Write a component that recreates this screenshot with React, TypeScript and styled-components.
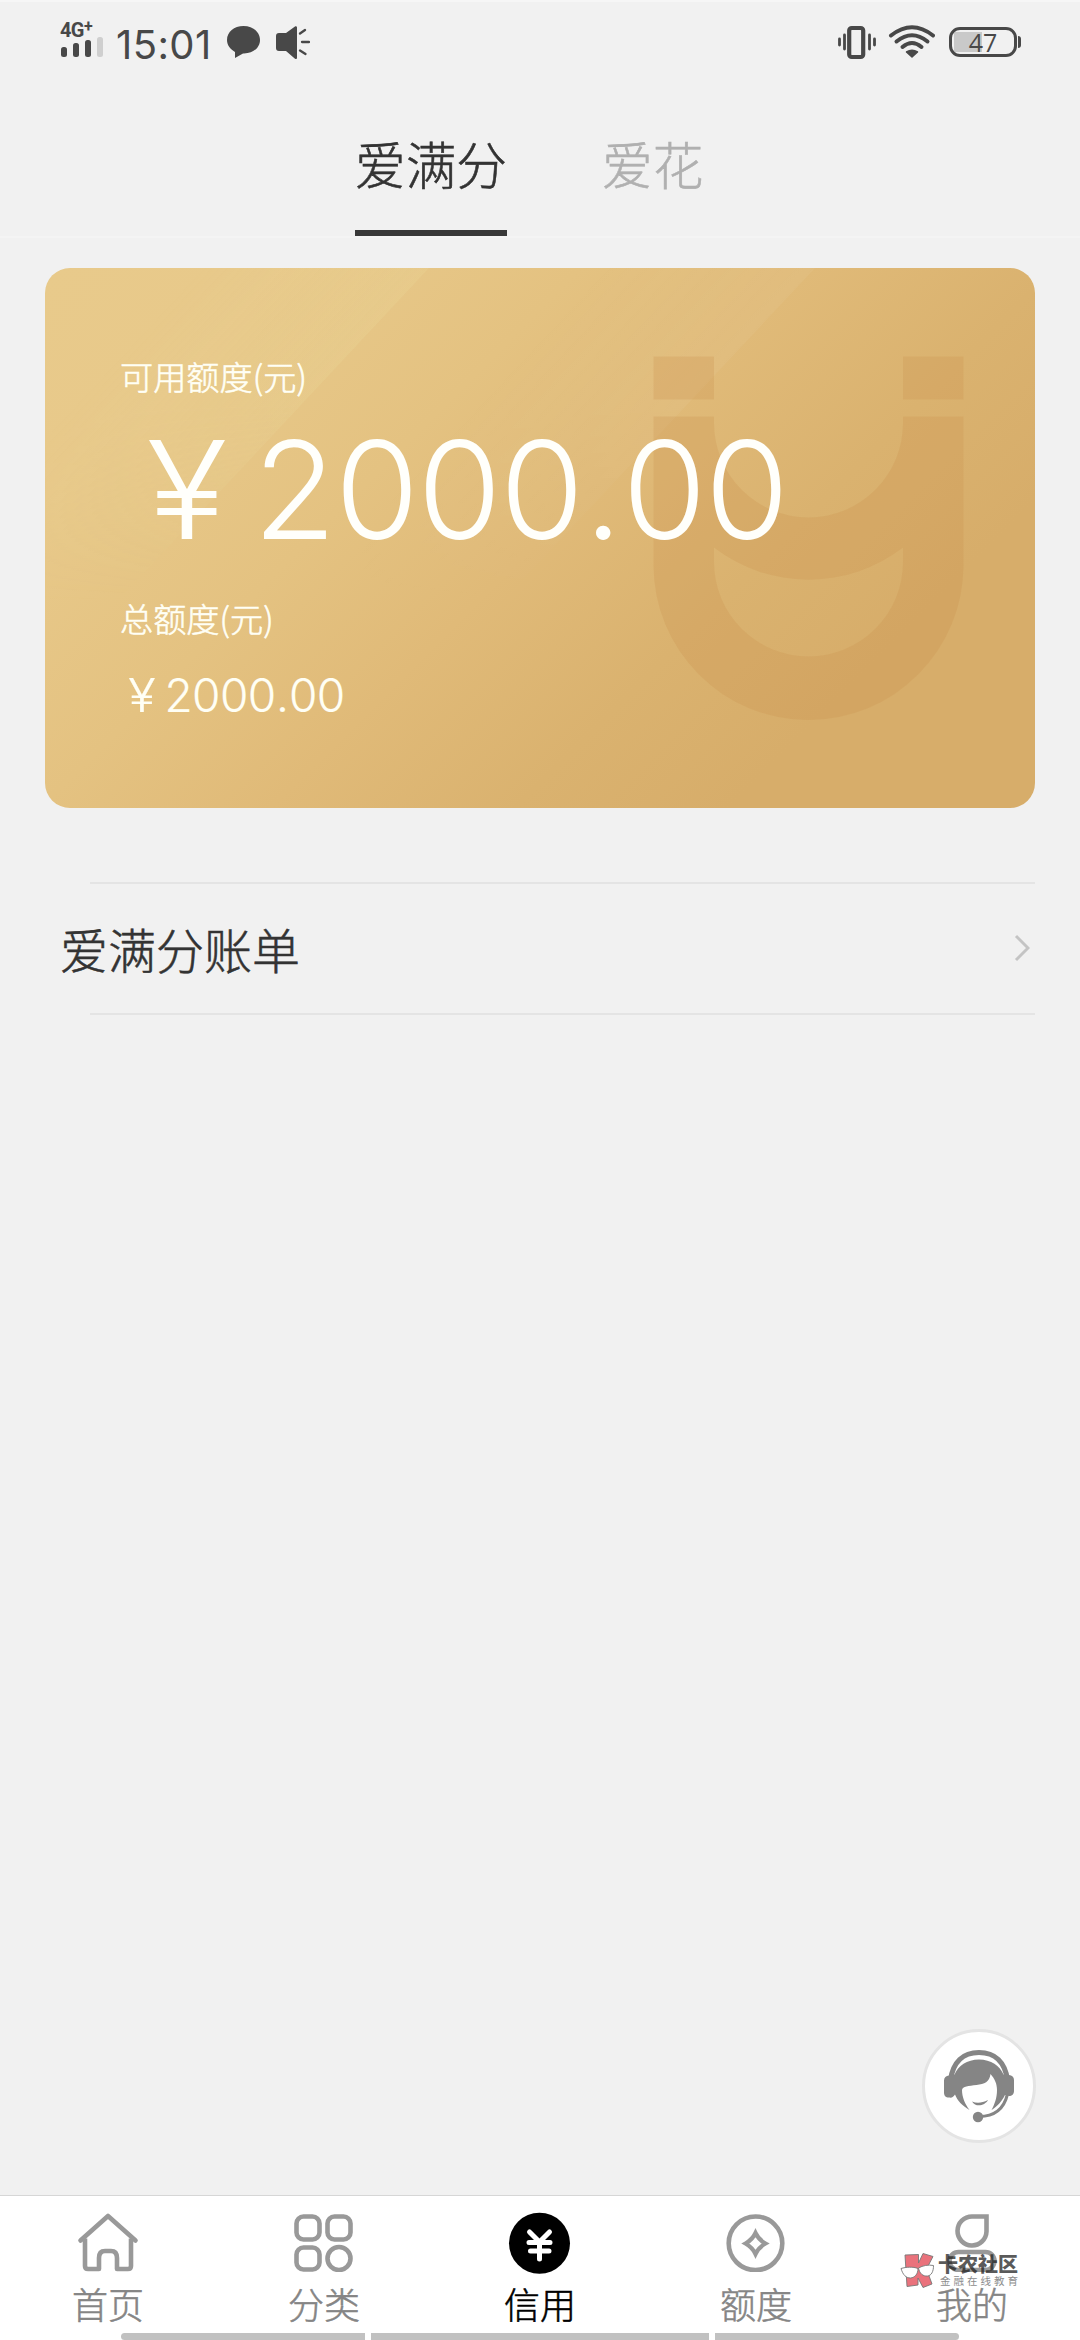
import React from "react";
import styled, { createGlobalStyle } from "styled-components";

const CJK = `"Noto Sans CJK SC", sans-serif`;
const LATIN = `Inter, "Noto Sans CJK SC", sans-serif`;

const GlobalStyle = createGlobalStyle`
  * { box-sizing: border-box; }
  body { margin: 0; background: #f1f1f1; }
  svg { display: block; flex: none; }
`;

const Screen = styled.div`
  position: relative;
  display: flex;
  flex-direction: column;
  width: 1080px;
  height: 2340px;
  overflow: hidden;
  background: #f1f1f1;
  border-top: 2px solid #f6f6f6;
  font-family: ${CJK};
  font-weight: 300;
  -webkit-text-stroke: 0.55px currentColor;
`;

const StatusBar = styled.div`
  display: flex;
  justify-content: space-between;
  height: 88px;
  padding: 18px 59px 0 60px;
  color: #484848;
  -webkit-text-stroke: 0;
`;

const StatusGroup = styled.div`
  display: flex;
  align-items: flex-start;
`;

const Signal = styled.div`
  display: flex;
  flex-direction: column;
  width: 54px;
`;

const Network = styled.div`
  height: 18px;
  font: 700 20px/20px Roboto, sans-serif;
  letter-spacing: -0.6px;
  white-space: nowrap;

  sup {
    position: relative;
    top: -1px;
    font-size: 16px;
    line-height: 0;
    vertical-align: 4px;
  }
`;

const Clock = styled.div`
  width: 112px;
  padding-left: 2px;
  font: 400 40px/50px ${LATIN};
  letter-spacing: 0.4px;
  white-space: nowrap;
`;

const Battery = styled.div`
  display: flex;
  align-items: center;
  margin: 7px 0 0 14px;
`;

const BatteryShell = styled.div`
  display: flex;
  align-items: center;
  justify-content: center;
  width: 68px;
  height: 30px;
  border: 3px solid #484848;
  border-radius: 11px;
  background: linear-gradient(90deg, #c9c9c9 28px, transparent 28px) 2px 2px / 58px 20px no-repeat;
  font: 400 25px/24px "Open Sans", sans-serif;
`;

const BatteryCap = styled.div`
  width: 3px;
  height: 12px;
  margin-left: 1px;
  border-radius: 0 3px 3px 0;
  background: #484848;
`;

const TabBar = styled.div`
  display: flex;
  gap: 95px;
  height: 148px;
  padding-left: 355px;
  border-bottom: 2px solid #f4f4f4;
`;

const Tab = styled.div<{ $active?: boolean }>`
  height: 146px;
  padding-top: 36px;
  border-bottom: ${(p) => (p.$active ? "6px solid #383838" : "none")};
  color: ${(p) => (p.$active ? "#333" : "#b0b0b0")};
  font-size: 50.67px;
  line-height: 74px;
`;

const Main = styled.main`
  flex: 1;
  display: flex;
  flex-direction: column;
  padding: 30px 45px 0;
`;

const Card = styled.section`
  position: relative;
  display: flex;
  flex-direction: column;
  height: 540px;
  padding: 84px 75px 0;
  overflow: hidden;
  border-radius: 25px;
  color: #fffff5;
  background: linear-gradient(135deg, #e8ca8b 0%, #e8c98a 15%, #e4c281 35%, #e0ba78 50%, #dab26f 66%, #d7ad6a 80%, #d7ad6a 100%);
`;

const CardArt = styled.svg`
  position: absolute;
  inset: 0;
`;

const CardLabel = styled.div`
  position: relative;
  font-size: 33.200px;
  line-height: 48px;
`;

const Available = styled.div`
  position: relative;
  display: flex;
  height: 194px;
  color: #fffffb;
  font: 300 136px/180px ${LATIN};
  letter-spacing: -1.5px;
  -webkit-text-stroke: 0;
`;

const Yen = styled.span<{ $w: number; $pad: number }>`
  width: ${(p) => p.$w / 1.1}px;
  margin-right: ${(p) => p.$w - p.$w / 1.1}px;
  padding-left: ${(p) => p.$pad}px;
  transform: scaleX(1.1);
  transform-origin: 0 50%;
`;

const Point = styled.span`
  padding: 0 0.012em;
`;

const Total = styled.div`
  position: relative;
  display: flex;
  margin-top: 23px;
  font: 300 46px/60px ${LATIN};
  letter-spacing: -0.6px;
  -webkit-text-stroke: 0.2px currentColor;
`;

const BillRow = styled.div`
  display: flex;
  align-items: center;
  justify-content: space-between;
  height: 133px;
  margin-top: 74px;
  padding: 0 5px 2px 15px;
  color: #333;
  font-size: 48px;
  background:
    linear-gradient(#e4e4e4, #e4e4e4) 45px 0 / 945px 2px no-repeat,
    linear-gradient(#e4e4e4, #e4e4e4) 45px 131px / 945px 2px no-repeat;
`;

const Service = styled.button`
  display: flex;
  align-items: center;
  justify-content: center;
  width: 114px;
  height: 114px;
  margin: auto -1px 52px auto;
  padding: 0;
  border: 3px solid #e4e4e4;
  border-radius: 50%;
  background: #fff;
`;

const NavBar = styled.nav`
  display: grid;
  grid-template-columns: repeat(5, 216px);
  height: 145px;
  border-top: 1px solid #d6d6d6;
  background: #fff;
`;

const NavItem = styled.div<{ $active?: boolean }>`
  display: flex;
  flex-direction: column;
  align-items: center;
  padding-top: 16px;
  color: ${(p) => (p.$active ? "#000" : "#858585")};
  font-size: 36px;
  line-height: 52px;

  svg { margin-bottom: 5px; }
`;

const Watermark = styled.div`
  position: absolute;
  left: 900px;
  top: 2248px;
  display: flex;
  gap: 3px;
  -webkit-text-stroke: 0;
`;

const WatermarkText = styled.div`
  display: flex;
  flex-direction: column;
  white-space: nowrap;
`;

const WatermarkName = styled.div`
  height: 24px;
  color: rgba(35, 35, 35, 0.75);
  font: 900 20px/28px ${CJK};
`;

const WatermarkSub = styled.div`
  padding-left: 2px;
  color: #8d8d8d;
  font: 400 10.5px/14px ${CJK};
  letter-spacing: 3px;
`;

const Gestures = styled.div`
  position: absolute;
  left: 121px;
  bottom: 0;
  display: flex;
  gap: 6px;
`;

const Gesture = styled.div<{ $w: number; $r: string }>`
  width: ${(p) => p.$w}px;
  height: 7px;
  border-radius: ${(p) => p.$r};
  background: #c1c1c1;
`;

const G = "#999";

const SignalBars = () => (
  <svg width="44" height="22" viewBox="0 0 44 22" fill="#484848" overflow="visible">
    <rect x="1" y="9" width="6" height="10" rx="2.5" />
    <rect x="13" y="5" width="6" height="14" rx="2.5" />
    <rect x="25" y="2" width="6" height="17" rx="2.5" />
    <rect x="37" y="-1" width="6" height="20" rx="2.5" fill="#cfcfcf" />
  </svg>
);

const IconStrip = styled.svg`
  margin-top: 5px;
`;

const StatusLeftIcons = () => (
  <IconStrip width="84" height="36" viewBox="0 0 84 36" fill="#484848">
    <path d="M17.500 1C8 1 1 7 1 15c0 5 3 9 8 12v6l8-4.500C26.500 29 34 23 34 15S27 1 17.500 1z" />
    <path d="M53 8h7L69 1.500c1-.8 2 0 2 1v30c0 1.500-1 2-2 1.200L60 26h-7c-2 0-3-1-3-3V11c0-2 1-3 3-3z" />
    <path d="M74 8.500l5-3.500M76 17h7M74 25.500l5.500 3.500" stroke="#484848" strokeWidth="2.300" strokeLinecap="round" />
  </IconStrip>
);

const StatusRightIcons = () => (
  <IconStrip width="98" height="36" viewBox="0 0 98 36" fill="none" stroke="#484848" strokeLinecap="round">
    <rect x="12.200" y="3" width="14" height="29" rx="2.500" strokeWidth="4.200" />
    <path d="M2.500 14v6M7.500 10v14M32.500 10v14M37.500 14v6" strokeWidth="2.800" />
    <path d="M54 10.500Q75 -6 96 10.500" strokeWidth="4" />
    <path d="M59.500 16.500Q75 4 90.500 16.500" strokeWidth="4" />
    <path d="M65.500 22Q75 14 84.500 22" strokeWidth="4" />
    <path d="M69.500 27Q75 23.500 80.500 27L75 32z" fill="#484848" strokeWidth="1.500" strokeLinejoin="round" />
  </IconStrip>
);

const CardDecor = () => (
  <CardArt width="990" height="540" viewBox="0 0 990 540">
    <defs>
      <linearGradient id="sheenA" gradientUnits="userSpaceOnUse" x1="100" y1="60" x2="270" y2="218">
        <stop offset="0" stopColor="#f2eeb4" stopOpacity="0" />
        <stop offset="0.350" stopColor="#f2eeb4" stopOpacity="0.060" />
        <stop offset="1" stopColor="#f2eeb4" stopOpacity="0.170" />
      </linearGradient>
      <linearGradient id="sheenB" gradientUnits="userSpaceOnUse" x1="500" y1="60" x2="650" y2="200">
        <stop offset="0" stopColor="#fff" stopOpacity="0" />
        <stop offset="1" stopColor="#fff" stopOpacity="0.065" />
      </linearGradient>
      <linearGradient id="fade" x1="0" y1="0" x2="0" y2="1">
        <stop offset="0" stopColor="#fff" />
        <stop offset="0.25" stopColor="#fff" />
        <stop offset="0.62" stopColor="#000" />
      </linearGradient>
      <mask id="fadeMask"><rect width="990" height="540" fill="url(#fade)" /></mask>
    </defs>
    <g mask="url(#fadeMask)">
      <path d="M0 0H384L0 411z" fill="url(#sheenA)" />
      <path d="M384 0H770L264 540H0V411z" fill="url(#sheenB)" />
    </g>
    <path
      fill="#c98f4b"
      fillOpacity="0.240"
      fillRule="evenodd"
      d="M608.500 88.500h60.500v43h-60.500zM858 88.500h60.500v43h-60.500zM608.500 148.500H669V155a94.500 94.500 0 0 0 189 0V148.500h60.500V297a155 155 0 0 1-310 0zM669 279.500V294a94.500 94.500 0 0 0 189 0V279.500A155 155 0 0 1 669 279.500z"
    />
  </CardArt>
);

const Headset = () => (
  <svg width="72" height="76" viewBox="0 0 72 76">
    <path d="M7.500 32C10 14 20 4.500 36 4.500S62 14 64.500 32" fill="none" stroke="#858585" strokeWidth="5.200" />
    <path d="M6 27.500l5.500-1C15 18 24 11.500 36 11.500S57 18 60.500 26.500l5.500.5c3 .5 5 2 5 5v11c0 3-2 5-5 5l-4-1C59 53 55 58 48.500 62c3-5.500 5.500-12 5.500-20 0-6-2-11-6.500-16-1 8-6 10-14 11-8 1-14 1-14.500 5 0 7 3 14 7.500 20C19 57.500 14.500 53 12 46.500 10.500 49 9 50 6 49.500c-3.500 0-5-2-5-5V32.500c0-3 2-4.500 5-5z" fill="#858585" />
    <path d="M29 53.500c5 2 10 1.500 16-1.500-3 5.500-12 8-16 1.500z" fill="#858585" />
    <path d="M64.500 46C61 61 51 68.500 36 68.500" fill="none" stroke="#858585" strokeWidth="3.200" />
    <circle cx="35" cy="69" r="5.200" fill="#858585" />
  </svg>
);

const HomeIcon = () => (
  <svg width="66" height="60" viewBox="0 0 66 60" fill="none" stroke={G} strokeWidth="4.600" strokeLinecap="round" strokeLinejoin="round">
    <path d="M5.500 28.500L33 4 60.500 28.500" />
    <path d="M10 26.500V54q0 3 3 3H24V46q0-7 6-7h6q6 0 6 7V57H53q3 0 3-3V26.500" strokeLinecap="butt" />
  </svg>
);

const GridIcon = () => (
  <svg width="66" height="60" viewBox="0 0 66 60" fill="none" stroke={G} strokeWidth="4.600">
    <rect x="5.500" y="4.500" width="23" height="23" rx="7" />
    <rect x="36.500" y="4.500" width="23" height="23" rx="7" />
    <rect x="5.500" y="35.500" width="23" height="22" rx="7" />
    <circle cx="48" cy="46.500" r="11.500" />
  </svg>
);

const CreditIcon = () => (
  <svg width="66" height="60" viewBox="0 0 66 60" overflow="visible">
    <circle cx="32.500" cy="31.300" r="30.500" />
    <path d="M22.500 20L32.500 30 42.500 20M22 30.500H43M23.500 39H42M32.500 30V47" fill="none" stroke="#fff" strokeWidth="5" strokeLinecap="round" strokeLinejoin="round" />
  </svg>
);

const QuotaIcon = () => (
  <svg width="66" height="60" viewBox="0 0 66 60" fill="none" stroke={G}>
    <circle cx="32.500" cy="31.300" r="26.800" strokeWidth="4.600" />
    <path d="M32.500 21Q35.500 27.500 42.500 31.500 35.500 35.500 32.500 42 29.500 35.500 22.500 31.500 29.500 27.500 32.500 21z" strokeWidth="4.200" />
  </svg>
);

const MineIcon = () => (
  <svg width="66" height="60" viewBox="0 0 66 60" fill="none" stroke={G} strokeWidth="4.600">
    <path d="M47.500 4.500V19.500A14.500 14.500 0 1 1 33 4.500z" />
    <rect x="10.500" y="40" width="45" height="18" rx="9" />
  </svg>
);

const WatermarkLogo = () => (
  <svg width="35" height="40" viewBox="0 0 35 40" stroke="#777" strokeWidth="0.900">
    <path d="M5 5L18.500 4.500V13L23 3.500 33 6.500 26.500 19 32 34 23 37.500 18 28V35L7 36.500z" fill="#ea727c" />
    <path d="M1 18.500C6 17 13 16.500 18 18.500 18 24 15 27.500 10.500 28 6 28 3 25 1 18.500z" fill="#fff" />
    <path d="M18.500 18C23 15.500 28 14.500 33.500 15.500 33.500 21.500 31.500 25.500 27.500 26 23 26.500 19.500 23.500 18.500 18z" fill="#fff" />
  </svg>
);

const navItems = [
  { label: "首页", Icon: HomeIcon },
  { label: "分类", Icon: GridIcon },
  { label: "信用", Icon: CreditIcon, active: true },
  { label: "额度", Icon: QuotaIcon },
  { label: "我的", Icon: MineIcon },
];

const Amount = () => (
  <span>2000<Point>.</Point>00</span>
);

export default function App() {
  return (
    <Screen>
      <GlobalStyle />
      <StatusBar>
        <StatusGroup>
          <Signal>
            <Network>4G<sup>+</sup></Network>
            <SignalBars />
          </Signal>
          <Clock>15:01</Clock>
          <StatusLeftIcons />
        </StatusGroup>
        <StatusGroup>
          <StatusRightIcons />
          <Battery>
            <BatteryShell>47</BatteryShell>
            <BatteryCap />
          </Battery>
        </StatusGroup>
      </StatusBar>
      <TabBar>
        <Tab $active>爱满分</Tab>
        <Tab>爱花</Tab>
      </TabBar>
      <Main>
        <Card>
          <CardDecor />
          <CardLabel>可用额度(元)</CardLabel>
          <Available>
            <Yen $w={133} $pad={24}>¥</Yen>
            <Amount />
          </Available>
          <CardLabel>总额度(元)</CardLabel>
          <Total>
            <Yen $w={44.5} $pad={7.5}>¥</Yen>
            <Amount />
          </Total>
        </Card>
        <BillRow>
          爱满分账单
          <svg width="16" height="28" viewBox="0 0 16 28" fill="none" stroke="#c4c4c4" strokeWidth="3">
            <path d="M2 2l12 12L2 26" />
          </svg>
        </BillRow>
        <Service aria-label="客服"><Headset /></Service>
      </Main>
      <NavBar>
        {navItems.map(({ label, Icon, active }) => (
          <NavItem key={label} $active={active}>
            <Icon />
            {label}
          </NavItem>
        ))}
      </NavBar>
      <Watermark>
        <WatermarkLogo />
        <WatermarkText>
          <WatermarkName>卡农社区</WatermarkName>
          <WatermarkSub>金融在线教育</WatermarkSub>
        </WatermarkText>
      </Watermark>
      <Gestures>
        <Gesture $w={244} $r="4px 0 0 4px" />
        <Gesture $w={338} $r="0" />
        <Gesture $w={244} $r="0 4px 4px 0" />
      </Gestures>
    </Screen>
  );
}
